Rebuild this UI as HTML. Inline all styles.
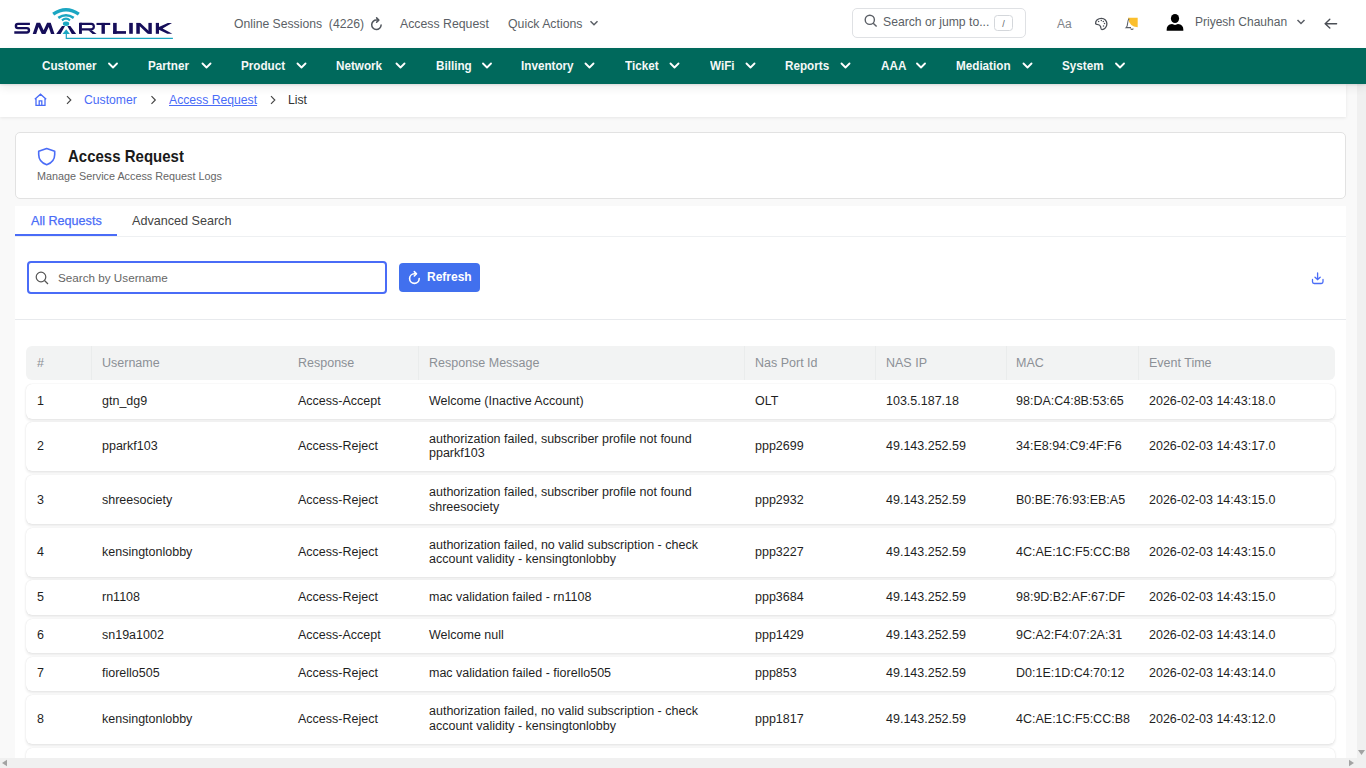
<!DOCTYPE html>
<html><head><meta charset="utf-8">
<style>
*{box-sizing:border-box;margin:0;padding:0}
html,body{width:1366px;height:768px;overflow:hidden;background:#fff;font-family:"Liberation Sans",sans-serif;color:#222}
.abs{position:absolute;white-space:nowrap}
#hdr{position:absolute;left:0;top:0;width:1366px;height:48px;background:#fff}
#nav{position:absolute;left:0;top:48px;width:1366px;height:36px;background:#00695c;z-index:5;box-shadow:0 1px 2px rgba(0,0,0,0.10),0 4px 9px rgba(0,0,0,0.07)}
#nav .it{position:absolute;top:11px;color:#f4f8f7;font-weight:700;font-size:11.7px;line-height:14px;transform:scaleY(1.1);transform-origin:0 80%}
#nav svg{position:absolute;top:61px}
#content{position:absolute;left:0;top:84px;width:1357px;height:674px;background:#f9f9f9;overflow:hidden}
#vsb{position:absolute;left:1357px;top:84px;width:9px;height:684px;background:#f0f0f0}
#hsb{position:absolute;left:0;top:758px;width:1366px;height:10px;background:#f0f0f0}
.gray{color:#5b5f66}
.th{font-size:12.5px;line-height:14px;color:#8c9096}
.td{font-size:12.5px;line-height:14px;color:#1f1f1f}
.tr{background:#fff;border-radius:6px;box-shadow:0 0 1px rgba(0,0,0,0.12),0 1.5px 3px rgba(0,0,0,0.09)}
</style></head><body>
<div id="hdr">
  <!-- logo -->
  <svg class="abs" style="left:0;top:0" width="190" height="48" viewBox="0 0 190 48">
    <g fill="#160e5a">
      <path d="M29.9,23.9 H18 C15.2,23.9 15.2,28.15 18,28.15 H26.8 C29.7,28.15 29.7,32.55 26.8,32.55 H14.3" fill="none" stroke="#160e5a" stroke-width="2.4"/>
      <path d="M32.7,33.9 L36.5,22.8 L40.1,22.8 L43.6,30.3 L47.1,22.8 L50.7,22.8 L54.5,33.9 L51,33.9 L48.7,27 L45.4,33.9 L41.8,33.9 L38.5,27 L36.2,33.9 Z"/>
      <path d="M56.2,33.9 L60.6,33.9 L65,26.1 L62,26.1 Z M67.3,26.1 L70.3,26.1 L76.2,33.9 L71.8,33.9 Z"/>
      <rect x="79" y="22.8" width="2.9" height="11.1"/>
      <path d="M80,23.9 H91.3 C94.7,23.9 94.7,29.3 91.3,29.3 H81.5" fill="none" stroke="#160e5a" stroke-width="2.2"/>
      <path d="M88.4,30.2 L91.8,30.2 L96.6,33.9 L92.6,33.9 Z"/>
      <rect x="96.5" y="22.9" width="13.7" height="2.1"/><rect x="101.5" y="22.9" width="3.4" height="10.9"/>
      <rect x="113.1" y="22.9" width="3.6" height="10.9"/><rect x="113.1" y="31.1" width="12.9" height="2.7"/>
      <rect x="129.2" y="22.9" width="3.6" height="10.9"/>
      <rect x="136.3" y="22.9" width="3.5" height="10.9"/><rect x="148.4" y="22.9" width="3.4" height="10.9"/>
      <path d="M136.3,22.9 L140.4,22.9 L151.8,33.8 L147.7,33.8 Z"/>
      <rect x="155.8" y="22.9" width="3.2" height="10.9"/>
      <path d="M158.9,27.1 L167.8,22.9 L172,22.9 L162.6,28.4 L172.3,33.8 L167.3,33.8 L158.9,29.7 Z"/>
    </g>
    <g fill="#1ba6c2">
      <ellipse cx="66.05" cy="23.7" rx="3.15" ry="2.2"/>
      <path d="M62.5,33.9 L66.2,29.2 L69.9,33.9 Z"/>
    </g>
    <g fill="none" stroke="#1ba6c2" stroke-linecap="butt">
      <path d="M53.2,14.2 Q66,5.2 78.8,14.2" stroke-width="3.4"/>
      <path d="M58.3,17.8 Q66,12.6 73.7,17.8" stroke-width="2.6"/>
      <path d="M62,20.4 Q66,16.8 70,20.4" stroke-width="2.1"/>
      <path d="M66.3,33.9 V38.3 H172.9" stroke-width="1.2"/>
    </g>
  </svg>
  <div class="abs gray" style="left:234px;top:17px;font-size:12.2px;line-height:14px">Online Sessions&nbsp;&nbsp;(4226)</div>
  <svg class="abs" style="left:366px;top:12px" width="22" height="22" viewBox="0 0 22 22" fill="none" stroke="#50555c" stroke-width="1.5" stroke-linecap="round" stroke-linejoin="round"><path d="M15.1,12.9 A4.7,4.7 0 1 1 10.6,8.1 H12.4"/><path d="M10.6,5.9 L12.8,8.1 L10.6,10.3"/></svg>
  <div class="abs gray" style="left:400px;top:17px;font-size:12.3px;line-height:14px">Access Request</div>
  <div class="abs gray" style="left:508px;top:17px;font-size:12.3px;line-height:14px">Quick Actions</div>
  <svg class="abs" style="left:589px;top:18px" width="10" height="10" viewBox="0 0 10 10" fill="none" stroke="#5b5f66" stroke-width="1.5"><path d="M1.5 3.2 L5 6.7 L8.5 3.2"/></svg>
  <!-- search -->
  <div class="abs" style="left:852px;top:8px;width:174px;height:30px;border:1px solid #dfe1e4;border-radius:5px"></div>
  <svg class="abs" style="left:864px;top:14px" width="14" height="14" viewBox="0 0 14 14" fill="none" stroke="#5b5f66" stroke-width="1.4"><circle cx="5.8" cy="5.8" r="4.6"/><path d="M9.2 9.2 L12.6 12.6"/></svg>
  <div class="abs gray" style="left:883px;top:15px;font-size:12.2px;line-height:14px">Search or jump to...</div>
  <div class="abs" style="left:994px;top:15px;width:19px;height:16px;border:1px solid #d4d7db;border-radius:3.5px;font-size:9px;line-height:17px;text-align:center;color:#5b5f66">/</div>
  <div class="abs" style="left:1057px;top:17px;font-size:12px;line-height:14px;color:#80848a">Aa</div>
  <!-- palette -->
  <svg class="abs" style="left:1090px;top:12px" width="22" height="22" viewBox="0 0 22 22" fill="none" stroke="#4b4f56" stroke-width="1.3"><path d="M5.6,11.6 C5.3,8.4 8.2,6.3 11.4,6.3 C14.6,6.3 16.9,8.8 16.9,11.8 C16.9,15 14.5,17.6 12,17.6 C10.8,17.6 10.9,16 10.6,14.6 C10.2,13 8.6,12.6 7.2,12.4 C6.4,12.2 5.7,12.2 5.6,11.6 Z"/><g fill="#4b4f56" stroke="none"><circle cx="8.6" cy="9.4" r="0.75"/><circle cx="11.3" cy="8.5" r="0.75"/><circle cx="13.3" cy="9.4" r="0.75"/><circle cx="14.5" cy="11.5" r="0.75"/><circle cx="13.5" cy="14" r="0.75"/></g></svg>
  <!-- bell -->
  <svg class="abs" style="left:1124px;top:16px" width="16" height="16" viewBox="0 0 16 16"><path d="M4,1.8 H13.7 V11.3 Q5.2,10.8 4,1.8 Z" fill="#fbbf2d"/><path d="M5.2 2.6 Q3.6 4 3.5 8 Q3.4 10.6 2.2 11.6 H7" fill="none" stroke="#5b5f66" stroke-width="1.1"/><path d="M6.6 12.6 Q8 14 9.4 12.6" fill="none" stroke="#5b5f66" stroke-width="1.1"/></svg>
  <!-- user -->
  <svg class="abs" style="left:1164px;top:12px" width="22" height="20" viewBox="0 0 22 20"><ellipse cx="11" cy="6.5" rx="4.1" ry="4.6" fill="#000"/><path d="M2.6 18.2 Q2.6 12.2 8 12 L11 13 L14 12 Q19.4 12.2 19.4 18.2 Q19.4 18.8 18.6 18.8 H3.4 Q2.6 18.8 2.6 18.2Z" fill="#000"/></svg>
  <div class="abs gray" style="left:1195px;top:15px;font-size:12px;line-height:14px">Priyesh Chauhan</div>
  <svg class="abs" style="left:1296px;top:17px" width="10" height="10" viewBox="0 0 10 10" fill="none" stroke="#5b5f66" stroke-width="1.5"><path d="M1.5 3 L5 6.5 L8.5 3"/></svg>
  <svg class="abs" style="left:1323px;top:17px" width="15" height="13" viewBox="0 0 15 13" fill="none" stroke="#4b4f56" stroke-width="1.4" stroke-linecap="round"><path d="M2.2 6.7 H13.6 M6.8 2.3 L2.2 6.7 L6.8 11.1"/></svg>
</div>

<div id="nav">
  <div class="it" style="left:42px">Customer</div>
  <div class="it" style="left:148px">Partner</div>
  <div class="it" style="left:241px">Product</div>
  <div class="it" style="left:336px">Network</div>
  <div class="it" style="left:436px">Billing</div>
  <div class="it" style="left:521px">Inventory</div>
  <div class="it" style="left:625px">Ticket</div>
  <div class="it" style="left:710px">WiFi</div>
  <div class="it" style="left:785px">Reports</div>
  <div class="it" style="left:881px">AAA</div>
  <div class="it" style="left:956px">Mediation</div>
  <div class="it" style="left:1062px">System</div>
  <svg style="position:absolute;left:0;top:0" width="1366" height="36" fill="none" stroke="#fff" stroke-width="1.8" stroke-linecap="round" stroke-linejoin="round">
    <path d="M109 15.5 l4 4 l4 -4 M202.5 15.5 l4 4 l4 -4 M297.5 15.5 l4 4 l4 -4 M396.5 15.5 l4 4 l4 -4 M483 15.5 l4 4 l4 -4 M585.5 15.5 l4 4 l4 -4 M670.5 15.5 l4 4 l4 -4 M746.5 15.5 l4 4 l4 -4 M841.5 15.5 l4 4 l4 -4 M917 15.5 l4 4 l4 -4 M1023.5 15.5 l4 4 l4 -4 M1116 15.5 l4 4 l4 -4"/>
  </svg>
</div>

<div id="content">
  <!-- breadcrumb (content coords: y offset 84) -->
  <div class="abs" style="left:0;top:0;width:1346px;height:33px;background:#fff;box-shadow:0 1px 3px rgba(0,0,0,0.08)"></div>
  <svg class="abs" style="left:33px;top:9px" width="15" height="14" viewBox="0 0 15 14" fill="none" stroke="#4a6cf7" stroke-width="1.3"><path d="M1.8 6.3 L7.5 1.2 L13.2 6.3 M3 5.5 V12.3 H12 V5.5 M6.2 12.3 V7.8 H8.8 V12.3"/></svg>
  <svg class="abs" style="left:0;top:0" width="300" height="33" fill="none" stroke="#444" stroke-width="1.15"><path d="M67 12.2 L70.8 16 L67 19.8 M151.5 12.2 L155.3 16 L151.5 19.8 M271 12.2 L274.8 16 L271 19.8"/></svg>
  <div class="abs" style="left:84px;top:9px;font-size:12.2px;line-height:14px;color:#4a6cf7">Customer</div>
  <div class="abs" style="left:169px;top:9px;font-size:12.2px;line-height:14px;color:#4a6cf7;text-decoration:underline">Access Request</div>
  <div class="abs" style="left:288px;top:9px;font-size:12.2px;line-height:14px;color:#333">List</div>

  <!-- title card -->
  <div class="abs" style="left:15px;top:48px;width:1331px;height:67px;background:#fff;border:1px solid #e2e2e2;border-radius:5px"></div>
  <svg class="abs" style="left:36px;top:63px" width="21" height="19" viewBox="0 0 21 19" fill="none" stroke="#4a6cf7" stroke-width="1.6" stroke-linejoin="round"><path d="M2.7 4.2 L10.7 1.5 L18.7 4.2 V7.5 C18.7 12.5 15 16.3 10.7 17.8 C6.4 16.3 2.7 12.5 2.7 7.5 Z"/></svg>
  <div class="abs" style="left:68px;top:64px;font-size:15px;line-height:18px;font-weight:700;color:#1a1a1a;transform:scaleY(1.08);transform-origin:0 78%">Access Request</div>
  <div class="abs" style="left:37px;top:86px;font-size:10.8px;line-height:12px;color:#666">Manage Service Access Request Logs</div>

  <!-- main white block -->
  <div class="abs" style="left:15px;top:122px;width:1331px;height:600px;background:#fff"></div>
  <div class="abs" style="left:15px;top:152px;width:1331px;height:1px;background:#eef0f2"></div>
  <div class="abs" style="left:15px;top:150px;width:102px;height:2px;background:#4a6cf7"></div>
  <div class="abs" style="left:31px;top:130px;font-size:12.6px;line-height:14px;color:#4a6cf7;-webkit-text-stroke:0.25px #4a6cf7">All Requests</div>
  <div class="abs" style="left:132px;top:130px;font-size:12.6px;line-height:14px;color:#444">Advanced Search</div>

  <!-- search toolbar -->
  <div class="abs" style="left:27px;top:177px;width:360px;height:33px;border:2px solid #4a6cf7;border-radius:4px;background:#fff"></div>
  <svg class="abs" style="left:35px;top:187px" width="14" height="14" viewBox="0 0 14 14" fill="none" stroke="#555" stroke-width="1.2"><circle cx="6" cy="6" r="4.8"/><path d="M9.5 9.5 L13 13"/></svg>
  <div class="abs" style="left:58px;top:187px;font-size:11.7px;line-height:14px;color:#666">Search by Username</div>
  <div class="abs" style="left:399px;top:178.5px;width:81px;height:29.5px;background:#4170ee;border-radius:4px"></div>
  <svg class="abs" style="left:403px;top:182px" width="22" height="22" viewBox="0 0 22 22" fill="none" stroke="#fff" stroke-width="1.6" stroke-linecap="round" stroke-linejoin="round"><path d="M16.2,12.6 A4.8,4.8 0 1 1 11.4,7.8 H13.1"/><path d="M11.3,5.6 L13.5,7.8 L11.3,10"/></svg>
  <div class="abs" style="left:427px;top:186px;font-size:12px;line-height:14px;color:#fff;font-weight:700">Refresh</div>
  <svg class="abs" style="left:1310px;top:186px" width="16" height="16" viewBox="0 0 16 16" fill="none" stroke="#4a6cf7" stroke-width="1.3" stroke-linecap="round"><path d="M7.6 3 V9.5 M5 7.2 L7.6 9.6 L10.2 7.2 M2.5 9.5 V11.8 Q2.5 13.5 4.2 13.5 H11.3 Q13 13.5 13 11.8 V9.5"/></svg>
  <div class="abs" style="left:15px;top:235px;width:1331px;height:1px;background:#e8eaed"></div>

  <!-- table -->
  <div id="tbl">
<div class="abs" style="left:26px;top:262px;width:1309px;height:34px;background:#f2f3f3;border-radius:6px"></div>
<div class="abs" style="left:91px;top:262px;width:1px;height:34px;background:#eaecec"></div>
<div class="abs" style="left:418px;top:262px;width:1px;height:34px;background:#eaecec"></div>
<div class="abs" style="left:744px;top:262px;width:1px;height:34px;background:#eaecec"></div>
<div class="abs" style="left:875px;top:262px;width:1px;height:34px;background:#eaecec"></div>
<div class="abs" style="left:1006px;top:262px;width:1px;height:34px;background:#eaecec"></div>
<div class="abs" style="left:1138px;top:262px;width:1px;height:34px;background:#eaecec"></div>
<div class="abs th" style="left:37px;top:272px">#</div>
<div class="abs th" style="left:102px;top:272px">Username</div>
<div class="abs th" style="left:298px;top:272px">Response</div>
<div class="abs th" style="left:429px;top:272px">Response Message</div>
<div class="abs th" style="left:755px;top:272px">Nas Port Id</div>
<div class="abs th" style="left:886px;top:272px">NAS IP</div>
<div class="abs th" style="left:1016px;top:272px">MAC</div>
<div class="abs th" style="left:1149px;top:272px">Event Time</div>
<div class="abs tr" style="left:26px;top:300.0px;width:1309px;height:34.7px"></div>
<div class="abs td" style="left:37px;top:310px">1</div>
<div class="abs td" style="left:102px;top:310px">gtn_dg9</div>
<div class="abs td" style="left:298px;top:310px">Access-Accept</div>
<div class="abs td" style="left:429px;top:310px">Welcome (Inactive Account)</div>
<div class="abs td" style="left:755px;top:310px">OLT</div>
<div class="abs td" style="left:886px;top:310px">103.5.187.18</div>
<div class="abs td" style="left:1016px;top:310px">98:DA:C4:8B:53:65</div>
<div class="abs td" style="left:1149px;top:310px">2026-02-03 14:43:18.0</div>
<div class="abs tr" style="left:26px;top:338.2px;width:1309px;height:49.2px"></div>
<div class="abs td" style="left:37px;top:355px">2</div>
<div class="abs td" style="left:102px;top:355px">pparkf103</div>
<div class="abs td" style="left:298px;top:355px">Access-Reject</div>
<div class="abs td" style="left:429px;top:348px">authorization failed, subscriber profile not found</div>
<div class="abs td" style="left:429px;top:362px">pparkf103</div>
<div class="abs td" style="left:755px;top:355px">ppp2699</div>
<div class="abs td" style="left:886px;top:355px">49.143.252.59</div>
<div class="abs td" style="left:1016px;top:355px">34:E8:94:C9:4F:F6</div>
<div class="abs td" style="left:1149px;top:355px">2026-02-03 14:43:17.0</div>
<div class="abs tr" style="left:26px;top:390.9px;width:1309px;height:49.2px"></div>
<div class="abs td" style="left:37px;top:409px">3</div>
<div class="abs td" style="left:102px;top:409px">shreesociety</div>
<div class="abs td" style="left:298px;top:409px">Access-Reject</div>
<div class="abs td" style="left:429px;top:401px">authorization failed, subscriber profile not found</div>
<div class="abs td" style="left:429px;top:416px">shreesociety</div>
<div class="abs td" style="left:755px;top:409px">ppp2932</div>
<div class="abs td" style="left:886px;top:409px">49.143.252.59</div>
<div class="abs td" style="left:1016px;top:409px">B0:BE:76:93:EB:A5</div>
<div class="abs td" style="left:1149px;top:409px">2026-02-03 14:43:15.0</div>
<div class="abs tr" style="left:26px;top:443.6px;width:1309px;height:49.2px"></div>
<div class="abs td" style="left:37px;top:461px">4</div>
<div class="abs td" style="left:102px;top:461px">kensingtonlobby</div>
<div class="abs td" style="left:298px;top:461px">Access-Reject</div>
<div class="abs td" style="left:429px;top:454px">authorization failed, no valid subscription - check</div>
<div class="abs td" style="left:429px;top:468px">account validity - kensingtonlobby</div>
<div class="abs td" style="left:755px;top:461px">ppp3227</div>
<div class="abs td" style="left:886px;top:461px">49.143.252.59</div>
<div class="abs td" style="left:1016px;top:461px">4C:AE:1C:F5:CC:B8</div>
<div class="abs td" style="left:1149px;top:461px">2026-02-03 14:43:15.0</div>
<div class="abs tr" style="left:26px;top:496.3px;width:1309px;height:34.7px"></div>
<div class="abs td" style="left:37px;top:506px">5</div>
<div class="abs td" style="left:102px;top:506px">rn1108</div>
<div class="abs td" style="left:298px;top:506px">Access-Reject</div>
<div class="abs td" style="left:429px;top:506px">mac validation failed - rn1108</div>
<div class="abs td" style="left:755px;top:506px">ppp3684</div>
<div class="abs td" style="left:886px;top:506px">49.143.252.59</div>
<div class="abs td" style="left:1016px;top:506px">98:9D:B2:AF:67:DF</div>
<div class="abs td" style="left:1149px;top:506px">2026-02-03 14:43:15.0</div>
<div class="abs tr" style="left:26px;top:534.5px;width:1309px;height:34.7px"></div>
<div class="abs td" style="left:37px;top:544px">6</div>
<div class="abs td" style="left:102px;top:544px">sn19a1002</div>
<div class="abs td" style="left:298px;top:544px">Access-Accept</div>
<div class="abs td" style="left:429px;top:544px">Welcome null</div>
<div class="abs td" style="left:755px;top:544px">ppp1429</div>
<div class="abs td" style="left:886px;top:544px">49.143.252.59</div>
<div class="abs td" style="left:1016px;top:544px">9C:A2:F4:07:2A:31</div>
<div class="abs td" style="left:1149px;top:544px">2026-02-03 14:43:14.0</div>
<div class="abs tr" style="left:26px;top:572.7px;width:1309px;height:34.7px"></div>
<div class="abs td" style="left:37px;top:582px">7</div>
<div class="abs td" style="left:102px;top:582px">fiorello505</div>
<div class="abs td" style="left:298px;top:582px">Access-Reject</div>
<div class="abs td" style="left:429px;top:582px">mac validation failed - fiorello505</div>
<div class="abs td" style="left:755px;top:582px">ppp853</div>
<div class="abs td" style="left:886px;top:582px">49.143.252.59</div>
<div class="abs td" style="left:1016px;top:582px">D0:1E:1D:C4:70:12</div>
<div class="abs td" style="left:1149px;top:582px">2026-02-03 14:43:14.0</div>
<div class="abs tr" style="left:26px;top:610.9px;width:1309px;height:49.2px"></div>
<div class="abs td" style="left:37px;top:628px">8</div>
<div class="abs td" style="left:102px;top:628px">kensingtonlobby</div>
<div class="abs td" style="left:298px;top:628px">Access-Reject</div>
<div class="abs td" style="left:429px;top:620px">authorization failed, no valid subscription - check</div>
<div class="abs td" style="left:429px;top:635px">account validity - kensingtonlobby</div>
<div class="abs td" style="left:755px;top:628px">ppp1817</div>
<div class="abs td" style="left:886px;top:628px">49.143.252.59</div>
<div class="abs td" style="left:1016px;top:628px">4C:AE:1C:F5:CC:B8</div>
<div class="abs td" style="left:1149px;top:628px">2026-02-03 14:43:12.0</div>
<div class="abs tr" style="left:26px;top:663.6px;width:1309px;height:34.7px"></div>
</div><!--/tbl-->
</div>
<div id="vsb"></div>
<div id="hsb"></div>
<svg class="abs" style="left:0;top:758px" width="1366" height="10"><path d="M2 763 L7 759.8 V766.2Z" transform="translate(0,-758)" fill="#a3a3a3"/><path d="M1354 763 L1349 759.8 V766.2Z" transform="translate(0,-758)" fill="#a3a3a3"/></svg>
<svg class="abs" style="left:1357px;top:740px" width="9" height="18"><path d="M1 10 H8 L4.5 15Z" fill="#a3a3a3"/></svg>
</body></html>
